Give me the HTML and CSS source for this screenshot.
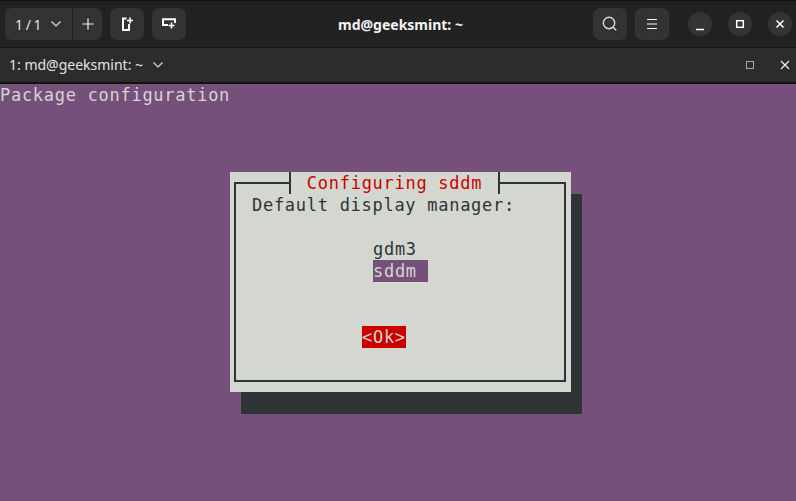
FILE: index.html
```html
<!DOCTYPE html>
<html lang="en">
<head>
<meta charset="utf-8">
<title>md@geeksmint: ~</title>
<link rel="stylesheet" href="styles.css">
</head>
<body>
<div class="window">
  <header class="headerbar">
    <div class="hb-left">
      <div class="pager">
        <button class="pager-count"><span>1 / 1</span>
          <svg class="ic-chev" viewBox="0 0 12 8"><path d="M1.500 1.500 6 6l4.500-4.500"/></svg>
        </button>
        <button class="pager-add">
          <svg class="ic16" viewBox="0 0 16 16"><path d="M2.500 8h11M8 2.500v11"/></svg>
        </button>
      </div>
      <button class="btn">
        <svg class="ic16 thick" viewBox="0 0 16 16"><path d="M7.500 2.500H4V14h6V8"/><path class="plus" d="M11 1.500v6M8 4.500h6"/></svg>
      </button>
      <button class="btn">
        <svg class="ic16 thick" viewBox="0 0 16 16"><path d="M7 9H2V3.200h12V7"/><path class="plus" d="M10.500 6.500v6M7.500 9.500h6"/></svg>
      </button>
    </div>
    <div class="hb-title">md@geeksmint: ~</div>
    <div class="hb-right">
      <button class="btn">
        <svg class="ic16 search" viewBox="0 0 16 16"><circle cx="7" cy="7" r="5.700"/><path d="M11.200 11.200l3 3"/></svg>
      </button>
      <button class="btn menu-btn">
        <svg class="ic16" viewBox="0 0 16 16"><path d="M3 3.500h10M3 8h10M3 12.500h10"/></svg>
      </button>
      <div class="wm">
        <button class="round"><svg class="ic16 wm-ic" viewBox="0 0 16 16"><path d="M4 13.500h8"/></svg></button>
        <button class="round"><svg class="ic16 wm-ic" viewBox="0 0 16 16"><rect x="4.700" y="4.700" width="6.600" height="6.600"/></svg></button>
        <button class="round"><svg class="ic16 wm-ic" viewBox="0 0 16 16"><path d="M4.500 4.500l7 7M11.500 4.500l-7 7"/></svg></button>
      </div>
    </div>
  </header>
  <nav class="tabbar">
    <div class="tab-label"><span class="tab-text">1: md@geeksmint: ~</span>
      <svg class="ic-chev" viewBox="0 0 12 8"><path d="M1.500 1.500 6 6l4.500-4.500"/></svg>
    </div>
    <div class="tab-actions">
      <svg class="ic-tab dim" viewBox="0 0 10 10"><rect x="1.500" y="1.500" width="7" height="7"/></svg>
      <svg class="ic-tab" viewBox="0 0 10 10"><path d="M1 1l8 8M9 1l-8 8"/></svg>
    </div>
  </nav>
  <main class="terminal">
    <div class="term-line">Package configuration</div>
    <section class="dialog">
      <div class="frame">
        <h1 class="dialog-title">Configuring sddm</h1>
        <p class="prompt">Default display manager:</p>
        <ul class="choices">
          <li>gdm3</li>
          <li class="selected">sddm</li>
        </ul>
        <div class="ok">&lt;Ok&gt;</div>
      </div>
    </section>
  </main>
</div>
</body>
</html>
```
FILE: styles.css
```css
* { box-sizing: border-box; }
html, body { margin: 0; padding: 0; height: 100%; overflow: hidden; background: #222; }
button { font: inherit; color: inherit; border: 0; padding: 0; background: none; }

.window { display: flex; flex-direction: column; width: 796px; height: 501px; }

.headerbar {
  height: 48px; flex: none;
  display: flex; align-items: center; justify-content: space-between;
  position: relative;
  background: #222222;
  border-top: 1px solid #150f15;
  border-bottom: 1px solid #161616;
  padding: 0 4px 0 5px;
  color: #f2f2f2;
  font-family: "Noto Sans", sans-serif;
}
.hb-left, .hb-right, .wm { display: flex; align-items: center; }
.hb-left { gap: 8px; }
.hb-right { gap: 8px; }
.wm { gap: 16px; margin-left: 11px; }

.pager {
  display: flex; height: 32px; width: 97px;
  background: #333333; border-radius: 7px;
}
.pager-count {
  width: 68px; display: flex; align-items: center;
  padding-left: 10px; gap: 8px;
  font-size: 14px; word-spacing: -1px; color: #e6e6e6;
  border-right: 1px solid #1f1f1f;
}
.pager-add { flex: 1; display: flex; align-items: center; justify-content: center; }

.btn {
  width: 34px; height: 32px; background: #333333; border-radius: 7px;
  display: flex; align-items: center; justify-content: center;
}
.round {
  width: 24px; height: 24px; border-radius: 50%; background: #333333;
  display: flex; align-items: center; justify-content: center;
}

.ic16 { width: 16px; height: 16px; fill: none; stroke: #f4f4f4; stroke-width: 1.2; }
.ic16.thick { stroke-width: 2; stroke: #fff; }
.ic16.thick .plus { stroke-width: 1.6; }
.ic16.search { stroke: #dcdcdc; stroke-width: 1.4; }
.ic16.wm-ic { stroke: #fff; stroke-width: 1.5; }
.ic-chev { width: 12px; height: 8px; fill: none; stroke: #d8d8d8; stroke-width: 1.2; }

.hb-title {
  position: absolute; left: 338px; top: 14px;
  font-size: 14px; font-weight: 700; line-height: 20px; color: #f4f4f4;
  white-space: nowrap;
}

.tabbar {
  height: 36px; flex: none;
  display: flex; align-items: center; justify-content: space-between;
  background: #2c2c2c;
  border-bottom: 2px solid #111111;
  padding: 0 6px 0 9px;
  font-family: "Noto Sans", sans-serif;
  color: #e4e4e4;
}
.tab-label { display: flex; align-items: center; gap: 9px; font-size: 14px; white-space: nowrap; }
.tab-text { padding-bottom: 2px; }
.tab-actions { display: flex; align-items: center; gap: 25px; }
.ic-tab { width: 10px; height: 10px; fill: none; stroke: #f0f0f0; stroke-width: 1.2; }
.ic-tab.dim { stroke: #a8a8a8; stroke-width: 1; }

.terminal {
  flex: 1; background: #75507b;
  font-family: "DejaVu Sans Mono", monospace;
  font-size: 17px; line-height: 22px; letter-spacing: .72px;
  color: #d3d7cf;
}
.term-line { height: 22px; white-space: pre; }

.dialog {
  width: 341px; height: 220px;
  margin: 66px 0 0 230px;
  padding: 10px 5px 10px 4px;
  background: #d3d7cf;
  box-shadow: 11px 22px 0 #2e3436;
  color: #2e3436;
}
.frame {
  height: 200px;
  border: 2px solid #2e3436;
  display: flex; flex-direction: column;
}
.dialog-title {
  align-self: flex-start;
  margin: -12px 0 0 53px;
  width: 211px; height: 22px;
  font: inherit; letter-spacing: inherit;
  color: #cc0000; text-align: center;
  background: #d3d7cf;
  border-left: 2px solid #2e3436;
  border-right: 2px solid #2e3436;
}
.prompt { margin: 0 0 0 16px; white-space: pre; }
.choices {
  list-style: none; margin: 22px 0 0 137px; padding: 0;
}
.choices li { width: 55px; height: 22px; }
.choices .selected { background: #75507b; color: #d3d7cf; }
.ok {
  margin: 44px 0 0 126px; width: 44px; height: 22px;
  background: #cc0000; color: #d3d7cf;
}
```
